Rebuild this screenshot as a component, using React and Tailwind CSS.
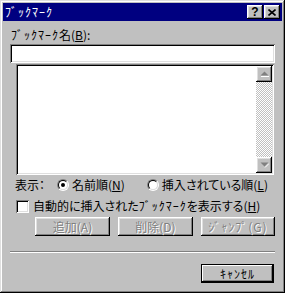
const raised =
  'shadow-[inset_-1px_-1px_0_#000,inset_1px_1px_0_#fff,inset_-2px_-2px_0_#808080,inset_2px_2px_0_#dfdfdf]';
const sunken =
  'shadow-[inset_1px_1px_0_#808080,inset_-1px_-1px_0_#fff,inset_2px_2px_0_#000,inset_-2px_-2px_0_#dfdfdf]';

// half-width kana: no proportional metrics, a bit of spacing like the bitmap font
function Kana({ children }) {
  return <span className="[font-feature-settings:normal] tracking-[1px]">{children}</span>;
}

function TitleButton({ children }) {
  return (
    <div
      className={`w-[16px] h-[14px] bg-[#c0c0c0] ${raised} flex items-center justify-center text-black`}
    >
      {children}
    </div>
  );
}

function PushButton({ label, disabled, isDefault, className = '' }) {
  return (
    <div
      className={`h-[19px] bg-[#c0c0c0] flex items-center justify-center ${
        isDefault
          ? 'border border-black shadow-[inset_-1px_-1px_0_#000,inset_1px_1px_0_#fff,inset_-2px_-2px_0_#808080]'
          : raised
      } ${className}`}
    >
      <span
        className={
          disabled
            ? 'text-[#808080] [text-shadow:1px_1px_0_#fff]'
            : 'text-black'
        }
      >
        {label}
      </span>
    </div>
  );
}

function Radio({ checked }) {
  return (
    <div className="w-[12px] h-[12px] rounded-full border border-t-[#808080] border-l-[#808080] border-b-white border-r-white">
      <div className="w-full h-full rounded-full border border-t-black border-l-black border-b-[#dfdfdf] border-r-[#dfdfdf] bg-white flex items-center justify-center">
        {checked && <div className="w-[4px] h-[4px] rounded-full bg-black" />}
      </div>
    </div>
  );
}

function ScrollArrow({ up }) {
  return (
    <div className={`w-[16px] h-[16px] bg-[#c0c0c0] ${raised} flex items-center justify-center`}>
      <svg width="9" height="6" viewBox="0 0 9 6">
        {up ? (
          <>
            <path d="M0.5 4.5 L4.5 0.5 L8.5 4.5 Z" fill="#808080" />
            <path d="M1 5.5 H9" stroke="#fff" strokeWidth="1" />
          </>
        ) : (
          <>
            <path d="M0.5 0.5 L8.5 0.5 L4.5 4.5 Z" fill="#808080" />
            <path d="M5 5.5 L9 1.5" stroke="#fff" strokeWidth="1" />
          </>
        )}
      </svg>
    </div>
  );
}

export default function App() {
  return (
    <div
      className={`w-[285px] h-[293px] bg-[#c0c0c0] p-[3px] flex flex-col text-[12px] leading-[16px] text-black shadow-[inset_-1px_-1px_0_#000,inset_1px_1px_0_#dfdfdf,inset_-2px_-2px_0_#808080,inset_2px_2px_0_#fff] [font-family:'Noto_Sans_CJK_JP',sans-serif] [font-feature-settings:'palt']`}
    >
      {/* Title bar */}
      <div className="h-[18px] bg-[#000080] flex items-center justify-between pl-[2px] pr-[2px]">
        <span className="text-white">
          <Kana>ﾌﾞｯｸﾏｰｸ</Kana>
        </span>
        <div className="flex gap-[1px]">
          <TitleButton>
            <span className="font-bold text-[12px] leading-none [font-family:'Liberation_Sans',sans-serif]">?</span>
          </TitleButton>
          <TitleButton>
            <svg width="8" height="7" viewBox="0 0 8 7">
              <path d="M0.5 0.5 L7.5 6.5 M7.5 0.5 L0.5 6.5" stroke="#000" strokeWidth="1.6" />
            </svg>
          </TitleButton>
        </div>
      </div>

      <div className="flex flex-col px-[7px] pt-[6px]">
        <div className="pl-[1px]">
          <Kana>ﾌﾞｯｸﾏｰｸ</Kana>名(<span className="underline">B</span>):
        </div>

        {/* Name input */}
        <div className={`h-[19px] w-[265px] bg-white ${sunken} mt-[1px]`} />

        {/* List box */}
        <div className={`ml-[6px] mt-[1px] h-[111px] w-[258px] bg-white ${sunken} p-[2px] flex justify-end`}>
          <div className="w-[16px] h-full flex flex-col">
            <ScrollArrow up />
            <div className="flex-1 bg-[repeating-conic-gradient(#c0c0c0_0_25%,#fff_0_50%)] bg-[length:2px_2px]" />
            <ScrollArrow />
          </div>
        </div>

        {/* Display order */}
        <div className="flex items-center mt-[2px] pl-[5px] h-[16px]">
          <span>表示：</span>
          <div className="ml-[12px] flex items-center gap-[3px]">
            <Radio checked />
            <span>
              名前順(<span className="underline">N</span>)
            </span>
          </div>
          <div className="ml-[22px] flex items-center gap-[3px]">
            <Radio />
            <span>
              挿入されている順(<span className="underline">L</span>)
            </span>
          </div>
        </div>

        {/* Checkbox */}
        <div className="flex items-center mt-[5px] pl-[6px] h-[16px]">
          <div className={`w-[13px] h-[13px] bg-white ${sunken}`} />
          <span className="ml-[4px]">
            自動的に挿入された<Kana>ﾌﾞｯｸﾏｰｸ</Kana>を表示する(<span className="underline">H</span>)
          </span>
        </div>

        {/* Action buttons */}
        <div className="flex mt-[3px] pl-[25px] gap-[8px]">
          <PushButton label="追加(A)" disabled className="w-[75px]" />
          <PushButton label="削除(D)" disabled className="w-[75px]" />
          <PushButton label={<Kana>ｼﾞｬﾝﾌﾟ(G)</Kana>} disabled className="w-[74px]" />
        </div>

        {/* Separator */}
        <div className="mt-[15px] w-[265px] h-[2px] border-t border-t-[#808080] border-b border-b-white" />

        <div className="flex justify-end mt-[11px] pr-[1px] w-[265px]">
          <PushButton label={<Kana>ｷｬﾝｾﾙ</Kana>} isDefault className="w-[73px]" />
        </div>
      </div>
    </div>
  );
}
